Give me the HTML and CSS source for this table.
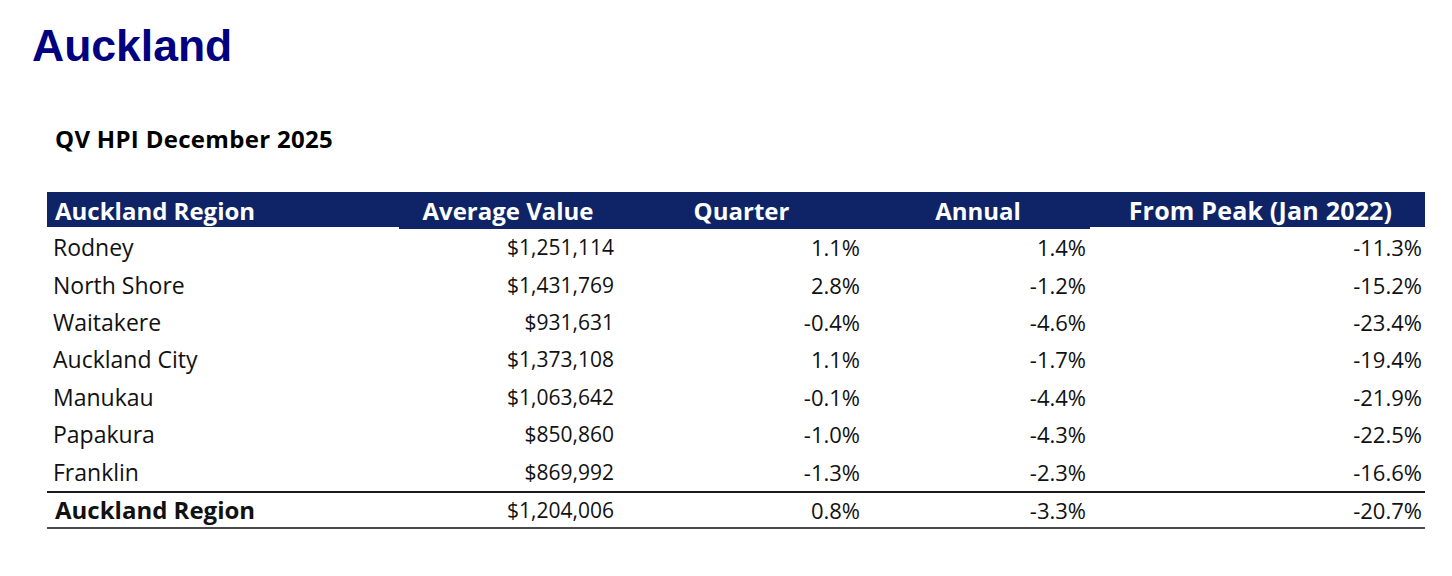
FILE: index.html
```html
<!DOCTYPE html>
<html>
<head>
<meta charset="utf-8">
<link rel="stylesheet" href="styles.css">
</head>
<body>
<div class="page">
  <h1 class="title">Auckland</h1>
  <h2 class="subtitle">QV HPI December 2025</h2>
  <table class="hpi">
    <colgroup>
      <col class="c1"><col class="c2"><col class="c3"><col class="c4"><col class="c5">
    </colgroup>
    <thead>
      <tr>
        <th class="lab">Auckland Region</th>
        <th class="mid">Average Value</th>
        <th class="mid">Quarter</th>
        <th class="mid">Annual</th>
        <th class="end">From Peak (Jan 2022)</th>
      </tr>
    </thead>
    <tbody>
      <tr><td class="lab">Rodney</td><td class="v2">$1,251,114</td><td class="v3">1.1%</td><td class="v4">1.4%</td><td class="v5">-11.3%</td></tr>
      <tr><td class="lab">North Shore</td><td class="v2">$1,431,769</td><td class="v3">2.8%</td><td class="v4">-1.2%</td><td class="v5">-15.2%</td></tr>
      <tr><td class="lab">Waitakere</td><td class="v2">$931,631</td><td class="v3">-0.4%</td><td class="v4">-4.6%</td><td class="v5">-23.4%</td></tr>
      <tr><td class="lab">Auckland City</td><td class="v2">$1,373,108</td><td class="v3">1.1%</td><td class="v4">-1.7%</td><td class="v5">-19.4%</td></tr>
      <tr><td class="lab">Manukau</td><td class="v2">$1,063,642</td><td class="v3">-0.1%</td><td class="v4">-4.4%</td><td class="v5">-21.9%</td></tr>
      <tr><td class="lab">Papakura</td><td class="v2">$850,860</td><td class="v3">-1.0%</td><td class="v4">-4.3%</td><td class="v5">-22.5%</td></tr>
      <tr><td class="lab">Franklin</td><td class="v2">$869,992</td><td class="v3">-1.3%</td><td class="v4">-2.3%</td><td class="v5">-16.6%</td></tr>
    </tbody>
    <tfoot>
      <tr><td class="lab total">Auckland Region</td><td class="v2">$1,204,006</td><td class="v3">0.8%</td><td class="v4">-3.3%</td><td class="v5">-20.7%</td></tr>
    </tfoot>
  </table>
</div>
</body>
</html>
```

FILE: styles.css
```css
html, body {
  margin: 0;
  padding: 0;
  background: #ffffff;
}

.page {
  padding: 23px 0 0 0;
}

.title {
  margin: 0 0 0 32px;
  font-family: "Liberation Sans", Arial, sans-serif;
  font-weight: bold;
  font-size: 44.5px;
  line-height: 45px;
  color: #000080;
}

.subtitle {
  margin: 57px 0 0 55px;
  font-family: "Open Sans", sans-serif;
  font-weight: bold;
  font-size: 24px;
  line-height: 28px;
  letter-spacing: 0.3px;
  color: #000000;
}

.hpi {
  margin: 39px 0 0 47px;
  border-collapse: collapse;
  table-layout: fixed;
  width: 1378px;
  font-family: "Open Sans", sans-serif;
  font-size: 23px;
  color: #111111;
}

.c1 { width: 352px; }
.c2 { width: 218px; }
.c3 { width: 249px; }
.c4 { width: 224px; }
.c5 { width: 335px; }

.hpi th {
  background: #0f2466;
  color: #ffffff;
  font-weight: bold;
  font-size: 24px;
  height: 37px;
  padding: 0;
  line-height: 37px;
  white-space: nowrap;
  vertical-align: middle;
}

.hpi th.lab {
  text-align: left;
  padding-left: 8px;
  box-shadow: inset 0 -2px 0 #ffffff;
}

.hpi th.mid {
  text-align: center;
}

.hpi th.end {
  text-align: center;
  padding-left: 6px;
  font-size: 25px;
  letter-spacing: 0.2px;
  box-shadow: inset 0 -2px 0 #ffffff;
}

.hpi td {
  height: 37.4px;
  padding: 0;
  line-height: 37px;
  white-space: nowrap;
  vertical-align: middle;
}

.hpi td.lab {
  text-align: left;
  padding-left: 6px;
}

.hpi td.total {
  font-weight: bold;
  font-size: 24px;
  padding-left: 8px;
}

.hpi td.v2,
.hpi td.v3,
.hpi td.v4,
.hpi td.v5 {
  text-align: right;
  font-size: 22px;
}

.hpi td.v2 { padding-right: 3px; font-size: 21px; }
.hpi td.v3 { padding-right: 6px; }
.hpi td.v4 { padding-right: 4px; }
.hpi td.v5 { padding-right: 3px; }

.hpi tfoot td {
  height: 34.4px;
  line-height: 34px;
  border-top: 2px solid #1a1a1a;
  border-bottom: 2px solid #4a4a4a;
}
```
